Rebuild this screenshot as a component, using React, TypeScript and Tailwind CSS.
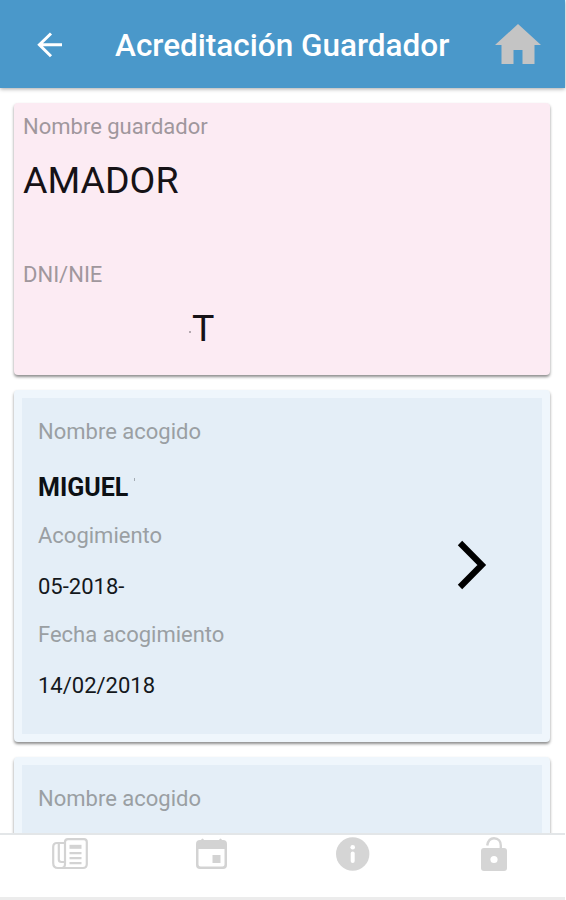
const acogidos = [
  { nombre: "MIGUEL", acogimiento: "05-2018-", fecha: "14/02/2018" },
  { nombre: "", acogimiento: "", fecha: "" },
]

function Header() {
  return (
    <header className="relative z-10 flex h-[88px] w-full shrink-0 items-center bg-[#4a98ca] pl-[37px] pr-6 pt-px shadow-[0_1px_4px_rgba(0,0,0,0.35)]">
      <svg width="26" height="26" viewBox="0 0 26 26" fill="none" stroke="#fff" strokeWidth="3">
        <path d="M14 1.5 2.4 12.8 14 24.2M2.6 12.8H25" />
      </svg>
      <h1 className="ml-[52px] mt-[2px] whitespace-nowrap text-[31.5px] font-medium leading-[40px] text-white">Acreditación Guardador</h1>
      <svg className="ml-auto" width="46" height="41" viewBox="0 0 46 41" fill="#c4c4c4">
        <path d="M23 0 46 21H39.5V40H27.5V26H18.5V40H6.500V21H0Z" />
      </svg>
    </header>
  )
}

function Label({ children }: { children: string }) {
  return <p className="text-[22px] leading-[30px] text-[#9a9fa3]">{children}</p>
}

function Guardador() {
  return (
    <section className="h-[272px] shrink-0 rounded-[4px] bg-[#fcebf3] pl-[9px] pt-[9px] shadow-[0_2px_3px_rgba(0,0,0,0.45)]">
      <p className="text-[22px] leading-[30px] text-[#a0979d]">Nombre guardador</p>
      <p className="mt-[15px] text-[37.5px] leading-[46px] text-[#161216]">AMADOR</p>
      <p className="mt-[57px] text-[22px] leading-[30px] text-[#a0979d]">DNI/NIE</p>
      <div className="mt-[15px] flex items-center pl-[166px]">
        <span className="mt-2 h-[2px] w-[2px] bg-[#b5a9b0]" />
        <p className="ml-px text-[37.5px] leading-[46px] text-[#161216]">T</p>
      </div>
    </section>
  )
}

function Acogido({ nombre, acogimiento, fecha }: { nombre: string; acogimiento: string; fecha: string }) {
  return (
    <section className="flex h-[352px] shrink-0 items-center justify-between rounded-[4px] border-8 border-[#eff6fc] bg-[#e4eef7] shadow-[0_2px_3px_rgba(0,0,0,0.45)]">
      <div className="h-full pl-4 pt-[19px]">
        <Label>Nombre acogido</Label>
        {nombre && (
          <>
            <div className="mt-[26px] flex">
              <p className="text-[25px] font-bold leading-[30px] text-[#0c1014]">{nombre}</p>
              <span className="ml-[6px] mt-[5px] h-[3px] w-px bg-[#a3abb3]" />
            </div>
            <div className="mt-[18px]">
              <Label>Acogimiento</Label>
            </div>
            <p className="mt-[21px] text-[22px] leading-[30px] text-[#14181c]">{acogimiento}</p>
            <div className="mt-[18px]">
              <Label>Fecha acogimiento</Label>
            </div>
            <p className="mt-[21px] text-[22px] leading-[30px] text-[#14181c]">{fecha}</p>
          </>
        )}
      </div>
      {nombre && (
        <svg className="mb-[3px] mr-[54px]" width="31" height="50" viewBox="0 0 31 50" fill="none" stroke="#000" strokeWidth="6.200">
          <path d="M3 3 24.800 25 3 47" />
        </svg>
      )}
    </section>
  )
}

function Footer() {
  return (
    <footer className="relative z-10 h-[67px] shrink-0 border-b-[3px] border-t-2 border-b-[#ececec] border-t-[#e3e6e8] bg-white">
      <nav className="flex h-[38px] items-center pl-[52px]">
        <svg width="36" height="32" viewBox="0 0 36 32" fill="none" stroke="#d3d3d3" strokeWidth="2.200">
          <path d="M13 5H5Q1.200 5 1.200 9V25Q1.200 30 6 30H31Q34.800 30 34.800 26V4Q34.800 1.200 32 1.200H16Q13 1.200 13 4V26Q13 30 9.500 30" />
          <path d="M6.800 5V21.500Q6.800 24 9.500 24H13" />
          <path d="M17.500 15.200H29.500M17.500 20.200H29.500M17.500 25.200H29.500" />
          <path d="M17.500 8.800H29.500" strokeWidth="4" />
        </svg>
        <svg className="ml-[108px]" width="31" height="32" viewBox="0 0 31 32" fill="#d3d3d3">
          <path
            fillRule="evenodd"
            d="M5 2Q6.500-1 8 2H23Q24.500-1 26 2H27Q31 2 31 6V27Q31 31 27 31H4Q0 31 0 27V6Q0 2 4 2ZM2.500 11V26.500Q2.500 28.500 4.500 28.500H26.500Q28.500 28.500 28.500 26.500V11Z"
          />
          <path d="M16.500 17H24.500V25H16.500Z" />
        </svg>
        <svg className="ml-[109px]" width="34" height="34" viewBox="0 0 34 34">
          <circle cx="16.700" cy="17" r="16.700" fill="#d5d5d5" />
          <circle cx="16.700" cy="10.300" r="2.300" fill="#fff" />
          <path d="M16.700 16.500V24" stroke="#fff" strokeWidth="4" strokeLinecap="round" />
        </svg>
        <svg className="ml-[111px]" width="26" height="34" viewBox="0 0 26 34">
          <path d="M6.200 8.500C7 4 9.500 1.300 13 1.300C17.500 1.300 19.800 4.500 19.800 8.500V12" fill="none" stroke="#d5d5d5" strokeWidth="2.400" />
          <rect y="11" width="26" height="23" rx="3" fill="#d5d5d5" />
          <circle cx="13" cy="22.500" r="3.600" fill="#fff" />
        </svg>
      </nav>
    </footer>
  )
}

export default function App() {
  return (
    <div className="h-[900px] w-[566px] overflow-hidden bg-white pr-px font-['Roboto',sans-serif]">
      <div className="flex h-full flex-col">
        <Header />
        <main className="flex min-h-0 flex-1 flex-col gap-[15px] overflow-hidden pl-[14px] pr-[15px] pt-[15px]">
          <Guardador />
          {acogidos.map((a, i) => (
            <Acogido key={i} {...a} />
          ))}
        </main>
        <Footer />
      </div>
    </div>
  )
}
